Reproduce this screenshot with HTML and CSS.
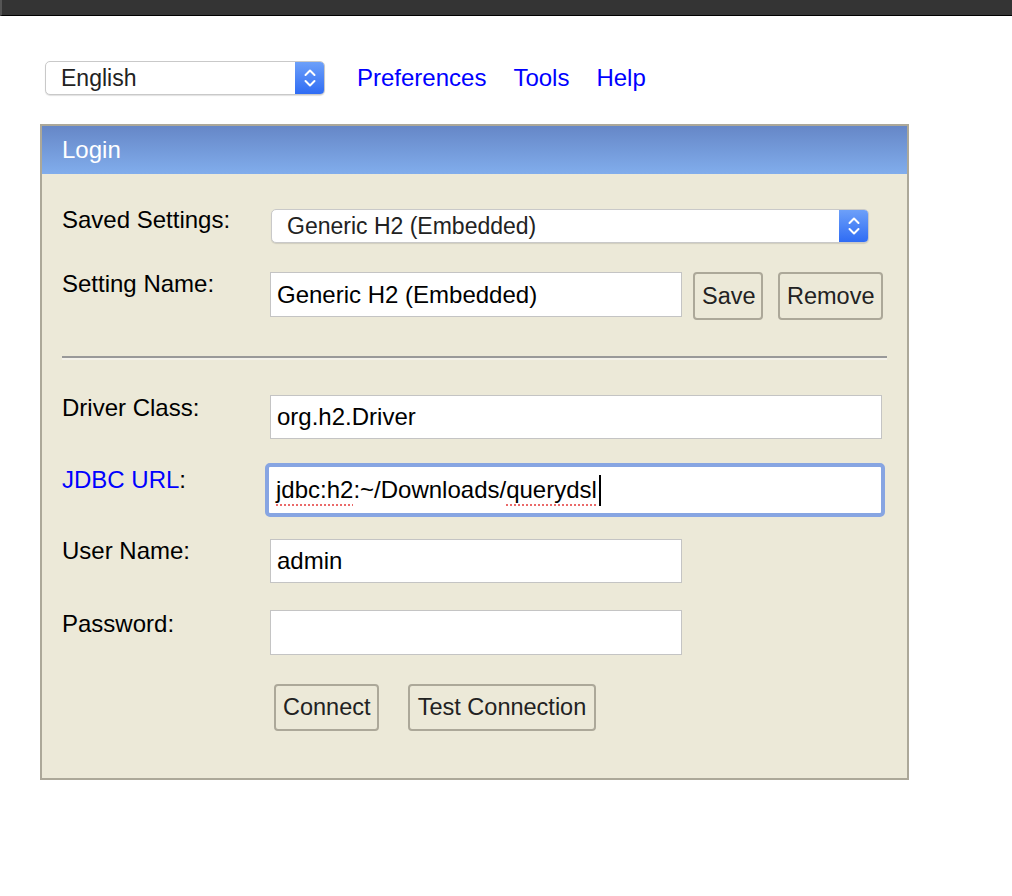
FILE: index.html
```html
<!DOCTYPE html>
<html>
<head>
<meta charset="utf-8">
<title>H2 Console</title>
<link rel="stylesheet" href="styles.css">
</head>
<body>
<div class="topbar"></div>
<div class="page">
  <div class="toolbar">
    <div class="select lang">
      <span class="select-text">English</span>
      <span class="select-btn">
        <svg width="14" height="22" viewBox="0 0 14 22"><path d="M2.5 8 L7 3.5 L11.5 8 M2.5 14 L7 18.5 L11.5 14" fill="none" stroke="#fff" stroke-width="2" stroke-linecap="round" stroke-linejoin="round"/></svg>
      </span>
    </div>
    <nav class="links">
      <a href="#">Preferences</a>
      <a href="#">Tools</a>
      <a href="#">Help</a>
    </nav>
  </div>

  <div class="panel">
    <div class="panel-head">Login</div>
    <div class="panel-body">
      <div class="row r-saved">
        <div class="label">Saved Settings:</div>
        <div class="select saved">
          <span class="select-text">Generic H2 (Embedded)</span>
          <span class="select-btn">
            <svg width="14" height="22" viewBox="0 0 14 22"><path d="M2.5 8 L7 3.5 L11.5 8 M2.5 14 L7 18.5 L11.5 14" fill="none" stroke="#fff" stroke-width="2" stroke-linecap="round" stroke-linejoin="round"/></svg>
          </span>
        </div>
      </div>
      <div class="row r-name">
        <div class="label">Setting Name:</div>
        <div class="input short">Generic H2 (Embedded)</div>
        <button class="btn btn-save">Save</button>
        <button class="btn btn-remove">Remove</button>
      </div>
      <div class="sep"></div>
      <div class="row r-driver">
        <div class="label">Driver Class:</div>
        <div class="input long">org.h2.Driver</div>
      </div>
      <div class="row r-url">
        <div class="label"><span class="blue">JDBC URL</span>:</div>
        <div class="input focus"><span class="spell">jdbc:h2</span>:~/Downloads/<span class="spell">querydsl</span><span class="caret"></span></div>
      </div>
      <div class="row r-user">
        <div class="label">User Name:</div>
        <div class="input short">admin</div>
      </div>
      <div class="row r-pass">
        <div class="label">Password:</div>
        <div class="input short"></div>
      </div>
      <div class="row r-actions">
        <button class="btn btn-connect">Connect</button>
        <button class="btn btn-test">Test Connection</button>
      </div>
    </div>
  </div>
</div>
</body>
</html>
```
FILE: styles.css
```css
html, body {
  margin: 0;
  padding: 0;
  background: #ffffff;
  font-family: "Liberation Sans", Arial, sans-serif;
  color: #000;
}

.topbar {
  height: 15px;
  background: #343434;
  border-bottom: 1px solid #000;
  border-left: 2px solid #555;
}

.page {
  padding: 45px 0 0 40px;
}

.toolbar {
  display: flex;
  align-items: center;
  padding-left: 5px;
}

.select {
  display: flex;
  align-items: stretch;
  height: 34px;
  box-sizing: border-box;
  background: #fff;
  border: 1px solid #c9c9c9;
  border-radius: 5px;
  box-shadow: 0 1px 1px rgba(0,0,0,0.12);
  overflow: hidden;
}

.select-text {
  flex: 1;
  display: flex;
  align-items: center;
  font-size: 23px;
  color: #222;
  padding-left: 15px;
  white-space: nowrap;
}

.select-btn {
  width: 29px;
  display: flex;
  align-items: center;
  justify-content: center;
  background: linear-gradient(#6da0f9, #2f6cf4);
}

.lang {
  width: 280px;
}

.links {
  display: flex;
  gap: 27px;
  margin-left: 32px;
}

.links a {
  font-size: 24px;
  color: #0000ff;
  text-decoration: none;
}

.panel {
  margin-top: 29px;
  width: 869px;
  box-sizing: border-box;
  border: 2px solid #aca899;
  background: #ece9d8;
}

.panel-head {
  height: 48px;
  box-sizing: border-box;
  padding-left: 20px;
  display: flex;
  align-items: center;
  font-size: 24px;
  color: #fff;
  background: linear-gradient(#6687c7, #81adec);
}

.panel-body {
  padding: 0 22px 47px 20px;
}

.row {
  display: flex;
  align-items: flex-start;
}

.label {
  width: 208px;
  flex: none;
  font-size: 24px;
  line-height: 28px;
  color: #000;
}

.blue {
  color: #0000ff;
}

.r-saved { margin-top: 35px; }
.r-saved .label { margin-top: -3px; }
.saved { width: 598px; margin-left: 1px; }

.r-name { margin-top: 29px; }
.r-name .label { margin-top: -2px; }

.input {
  height: 45px;
  box-sizing: border-box;
  background: #fff;
  border: 1px solid #c4c4c4;
  font-size: 24px;
  padding-left: 6px;
  display: flex;
  align-items: center;
  white-space: nowrap;
  color: #000;
}

.short { width: 412px; }
.long { width: 612px; }

.btn {
  font-family: "Liberation Sans", Arial, sans-serif;
  font-size: 23.5px;
  color: #222;
  background: #ece9d8;
  border: 2px solid #aca899;
  border-radius: 4px;
  height: 48px;
  padding: 0 7px;
  box-sizing: border-box;
}

.btn-save { margin-left: 11px; width: 70px; }
.btn-remove { margin-left: 15px; width: 105px; }

.sep {
  margin-top: 36px;
  width: 825px;
  height: 2px;
  background: #999;
  border-bottom: 2px solid #f4f2ea;
}

.r-driver { margin-top: 35px; }
.r-driver .label { margin-top: -1px; }
.r-driver .input { height: 44px; }

.r-url { margin-top: 24px; }
.r-url .label { margin-top: 3px; }
.focus {
  width: 622px;
  height: 54px;
  margin-left: -5px;
  border: 4px solid #87a5e2;
  border-radius: 5px;
  padding-left: 7px;
}

.spell {
  text-decoration: underline dotted #ea6a6a;
  text-underline-offset: 6px;
  text-decoration-thickness: 2px;
}

.caret {
  display: inline-block;
  width: 2px;
  height: 31px;
  background: #000;
  margin-left: 2px;
}

.r-user { margin-top: 22px; }
.r-user .label { margin-top: -2px; }
.r-user .input { height: 44px; }

.r-pass { margin-top: 27px; }
.r-pass .label { margin-top: 0; }

.r-actions {
  margin-top: 29px;
  padding-left: 212px;
  gap: 29px;
}

.btn-connect { width: 105px; height: 47px; }
.btn-test { width: 188px; height: 47px; }
```
